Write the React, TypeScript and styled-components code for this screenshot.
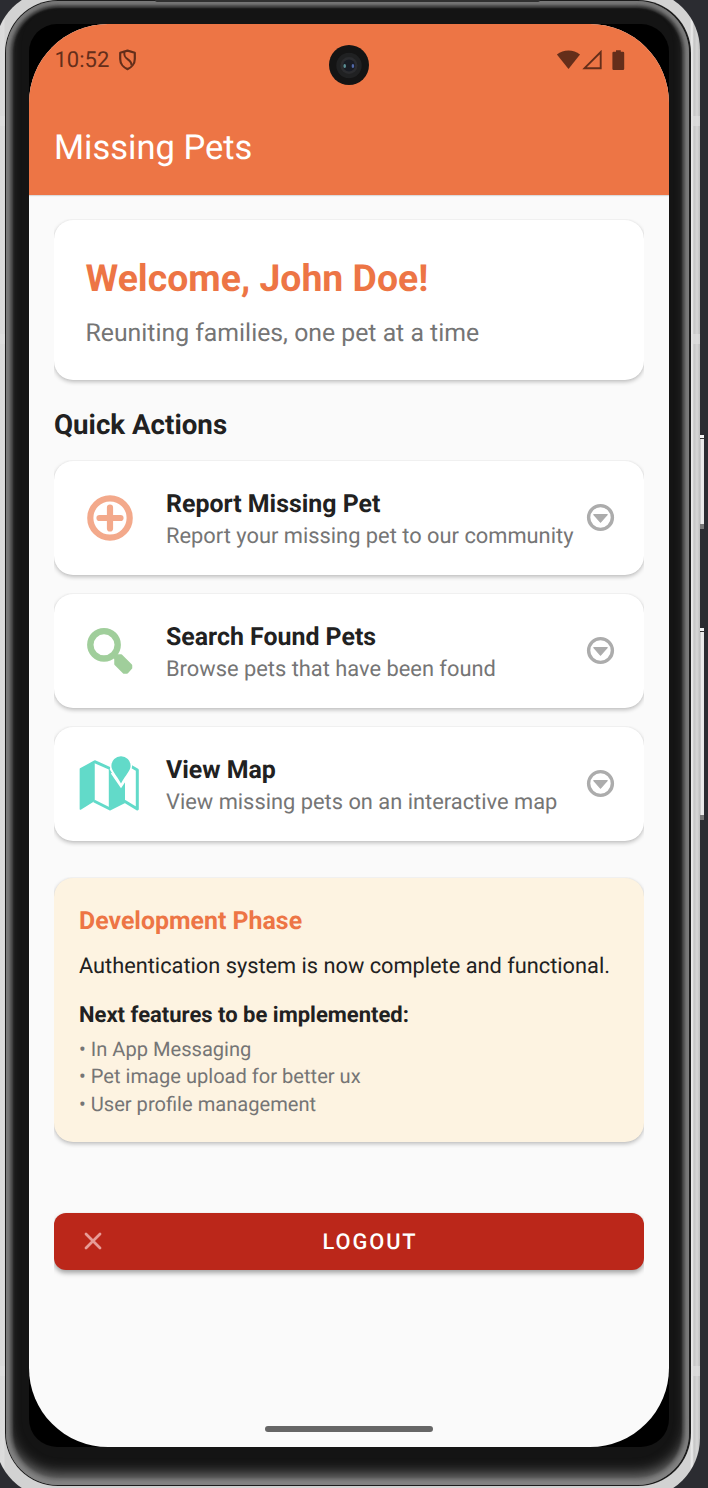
import React from 'react';
import styled, { createGlobalStyle } from 'styled-components';

const GlobalStyle = createGlobalStyle`
  * { box-sizing: border-box; }
  html, body { margin: 0; padding: 0; background: #2b2c31; }
  body { font-family: Roboto, "Liberation Sans", sans-serif; text-rendering: geometricPrecision; }
`;

const Stage = styled.div`
  position: relative;
  width: 708px;
  height: 1488px;
  overflow: hidden;
  background: #2b2c31;
`;

const Shell = styled.div`
  width: 705px;
  height: 1508px;
  margin: -10px 0 0 -5px;
  padding: 10px 9px 12px 10px;
  border-radius: 60px;
  background: linear-gradient(90deg, #d8d8d8 0, #dcdcdc 9px, #d2d2d2 10px, #d2d2d2 695px, #eee 697px, #c4c4c4 699px, #d6d6d6 702px, #bdbdbd 705px);
`;

const Rim = styled.div`
  height: 1486px;
  padding: 1px 2px 1px 1px;
  border-radius: 53px;
  background: #1c1c1c;
`;

const Bezel = styled.div`
  height: 1484px;
  padding: 23px 20px 38px 23px;
  border-radius: 52px;
  background: #141414;
  box-shadow:
    inset 0 -11px 14px 0 rgba(135, 135, 135, 0.85),
    inset 0 3px 4px 0 rgba(125, 125, 125, 0.5),
    inset 0 0 3px 4px #747474,
    inset 0 0 2px 7px #3c3c3c;
`;

const Well = styled.div`
  height: 1423px;
  border-radius: 28px;
  background: #000;
`;

const Screen = styled.div`
  position: relative;
  display: flex;
  flex-direction: column;
  height: 1423px;
  overflow: hidden;
  border-radius: 79px;
  background: #fafafa;
`;

const SideKey = styled.div<{ $top: number; $height: number }>`
  position: absolute;
  left: 700px;
  top: ${(p) => p.$top}px;
  width: 4px;
  height: ${(p) => p.$height}px;
  border-top: 3px solid #f4f4f4;
  border-bottom: 5px solid #777;
  background: linear-gradient(#333 0, #333 1px, transparent 1px),
    linear-gradient(90deg, #aaa 0, #ececec 1px, #e6e6e6 4px);
`;

const Antenna = styled.div<{ $left: number; $top: number; $width: number }>`
  position: absolute;
  left: ${(p) => p.$left}px;
  top: ${(p) => p.$top}px;
  width: ${(p) => p.$width}px;
  height: 10px;
  background: rgba(225, 225, 225, 0.6);
`;

const TopSlot = styled.div`
  position: absolute;
  left: 155px;
  top: 0;
  width: 385px;
  height: 2px;
  border-radius: 0 0 6px 6px;
  background: #303030;
`;

const Camera = styled.div`
  position: absolute;
  left: 299.5px;
  top: 21px;
  width: 40px;
  height: 40px;
`;

const Header = styled.header`
  height: 171px;
  flex: none;
  background: #ed7545;
  box-shadow: 0 1px 1px rgba(0, 0, 0, 0.12);
`;

const StatusBar = styled.div`
  display: flex;
  align-items: center;
  height: 72px;
  padding: 0 43px 0 25.5px;
  color: #642e1a;
  font-size: 22px;
`;

const StatusGlyph = styled.svg`
  display: block;
  flex: none;
`;

const Clock = styled.span`
  width: 63px;
`;

const StatusIcons = styled.div`
  display: flex;
  align-items: center;
  margin-left: auto;
`;

const AppTitle = styled.h1`
  margin: 0;
  padding-left: 25px;
  color: #fff;
  font-size: 34.5px;
  font-weight: 400;
  line-height: 104px;
`;

const Content = styled.main`
  display: flex;
  flex-direction: column;
  padding: 25px;
`;

const Card = styled.section`
  border-radius: 19px;
  background: #fff;
  box-shadow: 0 2px 4px rgba(0, 0, 0, 0.24), 0 0 2px rgba(0, 0, 0, 0.06);
  clip-path: inset(-1px 0 -8px 0);
`;

const WelcomeCard = styled(Card)`
  height: 160px;
  padding: 36px 31.5px;
`;

const Greeting = styled.h2`
  margin: 0;
  color: #ed7545;
  font-size: 37.4px;
  font-weight: 700;
  line-height: 46px;
`;

const Tagline = styled.p`
  margin: 16px 0 0;
  color: #757575;
  font-size: 24.8px;
  line-height: 31px;
`;

const SectionTitle = styled.h3`
  margin: 28px 0 20px;
  color: #212121;
  font-size: 27.7px;
  font-weight: 700;
  line-height: 33px;
`;

const ActionList = styled.div`
  display: flex;
  flex-direction: column;
  gap: 19px;
`;

const ActionCard = styled(Card)`
  display: flex;
  align-items: center;
  height: 114px;
  padding: 0 25px;
`;

const ActionText = styled.div`
  flex: 1;
  margin-left: 25px;
  padding-top: 6px;
  white-space: nowrap;
`;

const ActionTitle = styled.div`
  color: #212121;
  font-size: 24.9px;
  font-weight: 700;
  line-height: 32px;
`;

const ActionNote = styled.div`
  color: #757575;
  font-size: 21.85px;
  line-height: 32px;
`;

const Glyph = styled.svg`
  display: block;
  flex: none;
`;

const PhaseCard = styled(Card)`
  height: 264px;
  margin-top: 37px;
  padding: 28px 25px;
  background: #fdf3e1;
  white-space: nowrap;
`;

const PhaseTitle = styled.h3`
  margin: 0 0 13px;
  color: #ed7545;
  font-size: 24.9px;
  font-weight: 700;
  line-height: 32px;
`;

const PhaseText = styled.p`
  margin: 0;
  color: #212121;
  font-size: 21.77px;
  line-height: 31px;
`;

const NextTitle = styled.h4`
  margin: 18px 0 5px;
  color: #212121;
  font-size: 22px;
  font-weight: 700;
  line-height: 31px;
`;

const Feature = styled.div`
  color: #757575;
  font-size: 20.1px;
  line-height: 27.4px;
`;

const LogoutButton = styled.button`
  display: flex;
  align-items: center;
  height: 57px;
  margin-top: 71px;
  padding: 0 30px;
  border: 0;
  border-radius: 12px;
  background: #bb271a;
  box-shadow: 0 3px 5px rgba(0, 0, 0, 0.35);
  clip-path: inset(-1px 0 -10px 0);
  color: #fff;
  font-family: inherit;
  font-size: 21.8px;
  font-weight: 500;
  letter-spacing: 1.95px;
  text-rendering: inherit;
`;

const CloseGlyph = styled.svg`
  display: block;
  flex: none;
  margin-bottom: 1px;
`;

const LogoutLabel = styled.span`
  flex: 1;
  padding-top: 2px;
  padding-left: 42px;
  padding-right: 18px;
  text-align: center;
`;

const HomeBar = styled.div`
  width: 168px;
  height: 6px;
  margin: auto auto 15.5px;
  border-radius: 3px;
  background: #666;
`;

const PlusIcon = () => (
  <Glyph width="62" height="62" viewBox="0 0 62 62" fill="none" stroke="#f3a98b">
    <circle cx="31" cy="31" r="19.7" strokeWidth="6.2" />
    <path d="M20.500 31h21M31 20.500v21" strokeWidth="6.200" strokeLinecap="round" />
  </Glyph>
);

const SearchIcon = () => (
  <Glyph width="62" height="62" viewBox="0 0 62 62" fill="none" stroke="#a0ce9b">
    <circle cx="25" cy="24.800" r="13.700" strokeWidth="6.400" />
    <path d="M33 33l5 5" strokeWidth="5" />
    <path d="M36.500 40V37.500L38.500 35.500H42L52 45.500v2.500l-4 4.500h-3L36.500 44z" fill="#a0ce9b" strokeWidth="2.500" strokeLinejoin="round" />
  </Glyph>
);

const MapIcon = () => (
  <Glyph width="62" height="62" viewBox="0 0 62 62" fill="#62dac9">
    <g transform="translate(0 2.5)">
      <path d="M1.400 13.500 15 6V45L1.400 53.500z" stroke="#62dac9" strokeWidth="1.500" strokeLinejoin="round" />
      <path d="M15 5.800 31 13M15 45.500l16 8 15-7.500 12.300 7.500V14.500l-6-3.500" fill="none" stroke="#62dac9" strokeWidth="3" strokeLinejoin="round" />
      <path d="M29.800 12.500 42 31 46 25V46L29.800 53z" />
      <path d="M42 .8a9.600 9.600 0 0 1 9.600 9.600c0 4.500-5 9-9.600 17.600-4.600-8.600-9.600-13.100-9.600-17.600A9.600 9.600 0 0 1 42 .8z" stroke="#fff" strokeWidth="3" paintOrder="stroke" />
      <path d="M32.500 17.500 42 31.500 51 18" fill="none" stroke="#fff" strokeWidth="1.500" />
    </g>
  </Glyph>
);

const ExpandGlyph = styled.svg`
  display: block;
  flex: none;
  margin-bottom: 1px;
`;

const ExpandIcon = () => (
  <ExpandGlyph width="37" height="37" viewBox="0 0 37 37">
    <circle cx="18.5" cy="18.5" r="11.9" fill="none" stroke="#acacac" strokeWidth="3.4" />
    <path d="M11.8 15.6h13.4l-6.7 7.6z" fill="#acacac" stroke="#acacac" strokeWidth="1.2" strokeLinejoin="round" />
  </ExpandGlyph>
);

const actions = [
  { title: 'Report Missing Pet', note: 'Report your missing pet to our community', Icon: PlusIcon },
  { title: 'Search Found Pets', note: 'Browse pets that have been found', Icon: SearchIcon },
  { title: 'View Map', note: 'View missing pets on an interactive map', Icon: MapIcon },
];

const features = ['In App Messaging', 'Pet image upload for better ux', 'User profile management'];

export default function App() {
  return (
    <Stage>
      <GlobalStyle />
      <Shell>
        <Rim>
          <Bezel>
            <Well>
              <Screen>
                <Header>
                  <StatusBar>
                    <Clock>10:52</Clock>
                    <StatusGlyph width="20" height="22" viewBox="0 0 20 22" fill="none" stroke="#642e1a" strokeWidth="2.2" strokeLinejoin="round">
                      <path d="M9.500 1.600 16.800 3.800v6.200c0 4.600-3.300 8.600-7.300 10.100C5.500 18.600 2.200 14.600 2.200 10V3.800z" />
                      <path d="M6.500 3C4.500 11 14 9.500 13.500 16.500" strokeWidth="2" />
                    </StatusGlyph>
                    <StatusIcons>
                      <StatusGlyph width="70" height="22" viewBox="0 0 70 22" fill="#642e1a">
                        <path d="M.9 5.400C7.500.1 17.500.1 24 5.400L12.500 20z" />
                        <path d="M28.600 19.200 44.700 3v16.200z" fill="none" stroke="#642e1a" strokeWidth="1.900" />
                        <path d="M60 1.200h4.800v1.600h2.200a1.200 1.200 0 0 1 1.200 1.200v15.800a1.200 1.200 0 0 1-1.200 1.200h-9.400a1.200 1.200 0 0 1-1.200-1.200V4a1.200 1.200 0 0 1 1.200-1.200H60z" />
                      </StatusGlyph>
                    </StatusIcons>
                  </StatusBar>
                  <AppTitle>Missing Pets</AppTitle>
                </Header>
                <Content>
                  <WelcomeCard>
                    <Greeting>Welcome, John Doe!</Greeting>
                    <Tagline>Reuniting families, one pet at a time</Tagline>
                  </WelcomeCard>
                  <SectionTitle>Quick Actions</SectionTitle>
                  <ActionList>
                    {actions.map(({ title, note, Icon }) => (
                      <ActionCard key={title}>
                        <Icon />
                        <ActionText>
                          <ActionTitle>{title}</ActionTitle>
                          <ActionNote>{note}</ActionNote>
                        </ActionText>
                        <ExpandIcon />
                      </ActionCard>
                    ))}
                  </ActionList>
                  <PhaseCard>
                    <PhaseTitle>Development Phase</PhaseTitle>
                    <PhaseText>Authentication system is now complete and functional.</PhaseText>
                    <NextTitle>Next features to be implemented:</NextTitle>
                    {features.map((f) => (
                      <Feature key={f}>• {f}</Feature>
                    ))}
                  </PhaseCard>
                  <LogoutButton>
                    <CloseGlyph width="18" height="18" viewBox="0 0 18 18" fill="none" stroke="#e79c97" strokeWidth="2.8" strokeLinecap="round">
                      <path d="M2 2l14 14M16 2 2 16" />
                    </CloseGlyph>
                    <LogoutLabel>LOGOUT</LogoutLabel>
                  </LogoutButton>
                </Content>
                <HomeBar />
                <Camera>
                  <Glyph width="40" height="40" viewBox="0 0 40 40">
                    <circle cx="20" cy="20" r="20" fill="#141414" />
                    <circle cx="20" cy="20.500" r="12.700" fill="#202122" />
                    <circle cx="20" cy="20.500" r="8.500" fill="#2b2c2f" />
                    <circle cx="20" cy="20.500" r="6" fill="#191c24" />
                    <ellipse cx="15.700" cy="21" rx="1.300" ry="2" fill="#5d9196" />
                    <ellipse cx="23.900" cy="21" rx="1.300" ry="2" fill="#5269a8" />
                  </Glyph>
                </Camera>
              </Screen>
            </Well>
          </Bezel>
        </Rim>
      </Shell>
      <TopSlot />
      <Antenna $left={0} $top={116} $width={5} />
      <Antenna $left={0} $top={334} $width={5} />
      <Antenna $left={0} $top={1366} $width={5} />
      <Antenna $left={691} $top={116} $width={9} />
      <Antenna $left={691} $top={334} $width={9} />
      <Antenna $left={691} $top={1366} $width={9} />
      <SideKey $top={435} $height={94} />
      <SideKey $top={628} $height={192} />
    </Stage>
  );
}
